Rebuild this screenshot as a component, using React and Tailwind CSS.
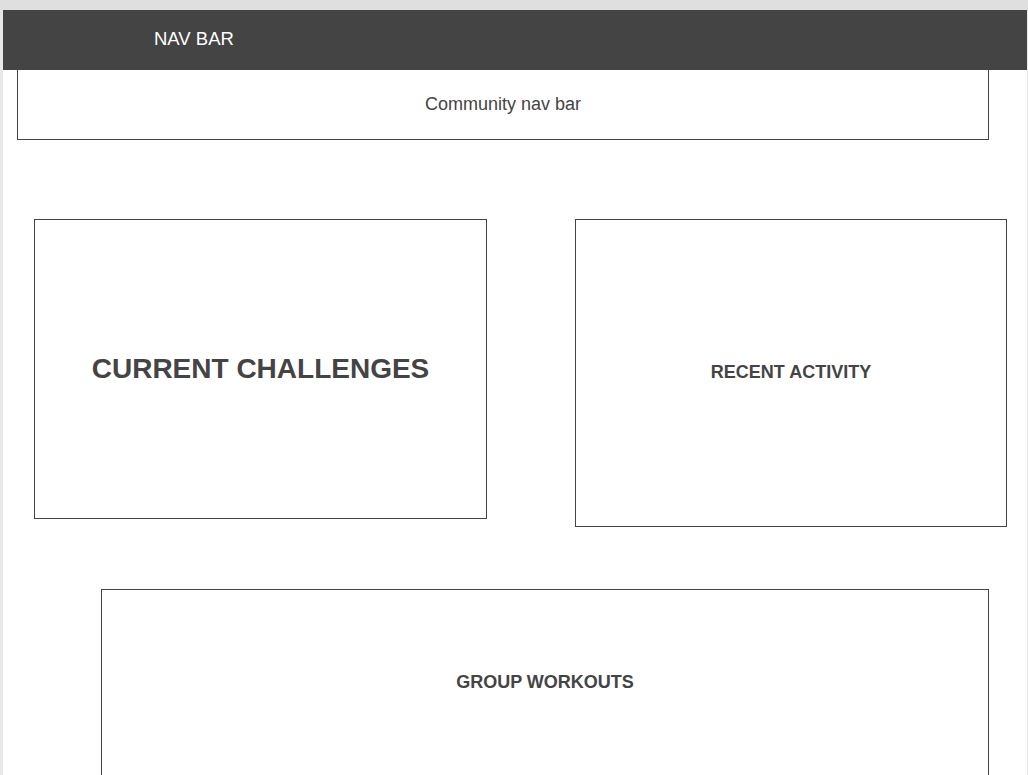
export default function App() {
  return (
    <div className="min-h-screen bg-[#e8e8e8] font-['Liberation_Sans',Arial,sans-serif] text-[#444]">
      {/* top browser strip */}
      <div className="h-[10px] bg-[#dfdfdf]" />

      <div className="ml-[3px] mr-[1px] bg-white h-[765px] overflow-hidden">
        {/* Nav */}
        <div className="flex h-[60px] items-center bg-[#444] pb-[2px] pl-[151px]">
          <span className="text-[18.5px] text-white">NAV BAR</span>
        </div>

        {/* Community nav */}
        <div className="ml-[14px] flex h-[70px] w-[972px] items-center justify-center border-x border-b border-[#444]">
          <span className="text-[18px]">Community nav bar</span>
        </div>

        {/* Challenges + activity */}
        <div className="mt-[79px] flex items-start">
          <div className="ml-[31px] flex h-[300px] w-[453px] items-center justify-center border border-[#444]">
            <h2 className="text-[28px] font-bold">CURRENT CHALLENGES</h2>
          </div>
          <div className="ml-[88px] flex h-[308px] w-[432px] items-center justify-center border border-[#444] pb-[2px]">
            <h3 className="text-[18px] font-bold">RECENT ACTIVITY</h3>
          </div>
        </div>

        {/* Group workouts */}
        <div className="ml-[98px] mt-[62px] flex h-[187px] w-[888px] items-center justify-center border border-[#444]">
          <h3 className="text-[18px] font-bold">GROUP WORKOUTS</h3>
        </div>
      </div>
    </div>
  );
}
